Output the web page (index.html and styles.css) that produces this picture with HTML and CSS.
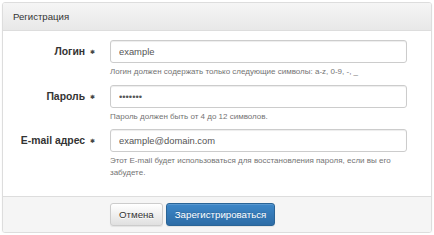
FILE: index.html
```html
<!DOCTYPE html>
<html lang="ru">
<head>
    <meta charset="UTF-8">
    <meta name="viewport" content="width=device-width, initial-scale=1.0">
    <title>Регистрация</title>
    <link rel="stylesheet" href="styles.css">
</head>
<body>
    <div class="panel">
        <div class="panel-heading">Регистрация</div>

        <form class="panel-body">
            <div class="form-row">
                <label for="login">Логин <span class="req">✱</span></label>
                <div>
                    <input id="login" type="text" value="example">
                    <p class="help">Логин должен содержать только следующие символы: a-z, 0-9, -, _</p>
                </div>
            </div>

            <div class="form-row">
                <label for="password">Пароль <span class="req">✱</span></label>
                <div>
                    <input id="password" type="password" value="1234567">
                    <p class="help">Пароль должен быть от 4 до 12 символов.</p>
                </div>
            </div>

            <div class="form-row">
                <label for="email">E-mail адрес <span class="req">✱</span></label>
                <div>
                    <input id="email" type="text" value="example@domain.com">
                    <p class="help">Этот E-mail будет использоваться для восстановления пароля, если вы его забудете.</p>
                </div>
            </div>
        </form>

        <div class="panel-footer">
            <button class="btn">Отмена</button>
            <button class="btn btn-primary">Зарегистрироваться</button>
        </div>
    </div>
</body>
</html>
```

FILE: styles.css
```css
body {
    margin: 0;
    background-color: #fff;
    font-family: "Liberation Sans", Arial, sans-serif;
    font-size: 9.6px;
    line-height: 13px;
    color: #333;
}
.panel {
    box-sizing: border-box;
    width: 430px;
    margin: 2px 0 0 2px;
    border: 1px solid #ddd;
    border-radius: 3px;
    box-shadow: 0 1px 2px rgba(0, 0, 0, 0.05);
    overflow: hidden;
}
.panel-heading {
    padding: 7px 10px 7px;
    border-bottom: 1px solid #ddd;
    background: linear-gradient(to bottom, #f5f5f5 0%, #e8e8e8 100%);
}
.panel-body {
    margin: 0;
    padding: 9px 23px 10px 10px;
}
.form-row {
    display: grid;
    grid-template-columns: 82px 297px;
    column-gap: 15px;
    margin-bottom: 7px;
}
.form-row:last-child {
    margin-bottom: 8px;
}
.form-row label {
    text-align: right;
    font-size: 10.4px;
    font-weight: bold;
    line-height: 23px;
}
.req {
    margin-left: 2px;
    font-family: "DejaVu Sans", sans-serif;
    font-size: 6px;
    color: #444;
    vertical-align: 1px;
}
.form-row input {
    box-sizing: border-box;
    display: block;
    width: 100%;
    height: 23px;
    padding: 3px 8px;
    border: 1px solid #ccc;
    border-radius: 3px;
    box-shadow: inset 0 1px 1px rgba(0, 0, 0, 0.075);
    font-family: "Liberation Sans", Arial, sans-serif;
    font-size: 9.4px;
    color: #555;
    outline: none;
}
.help {
    margin: 3px 0 0;
    font-size: 8px;
    line-height: 11.5px;
    color: #737373;
}
.panel-footer {
    display: flex;
    gap: 3px;
    padding: 6px 10px 6px 107px;
    border-top: 1px solid #ddd;
    background-color: #f5f5f5;
}
.btn {
    box-sizing: border-box;
    height: 23px;
    padding: 0 8px;
    border: 1px solid #ccc;
    border-radius: 3px;
    background: linear-gradient(to bottom, #fff 0%, #e0e0e0 100%);
    box-shadow: inset 0 1px 0 rgba(255, 255, 255, 0.15), 0 1px 1px rgba(0, 0, 0, 0.075);
    font-family: "Liberation Sans", Arial, sans-serif;
    font-size: 9.7px;
    color: #333;
    text-shadow: 0 1px 0 #fff;
}
.btn-primary {
    border-color: #2a6496;
    background: linear-gradient(to bottom, #3d87c8 0%, #2d6ca6 100%);
    color: #fff;
    text-shadow: 0 -1px 0 rgba(0, 0, 0, 0.15);
}
```
